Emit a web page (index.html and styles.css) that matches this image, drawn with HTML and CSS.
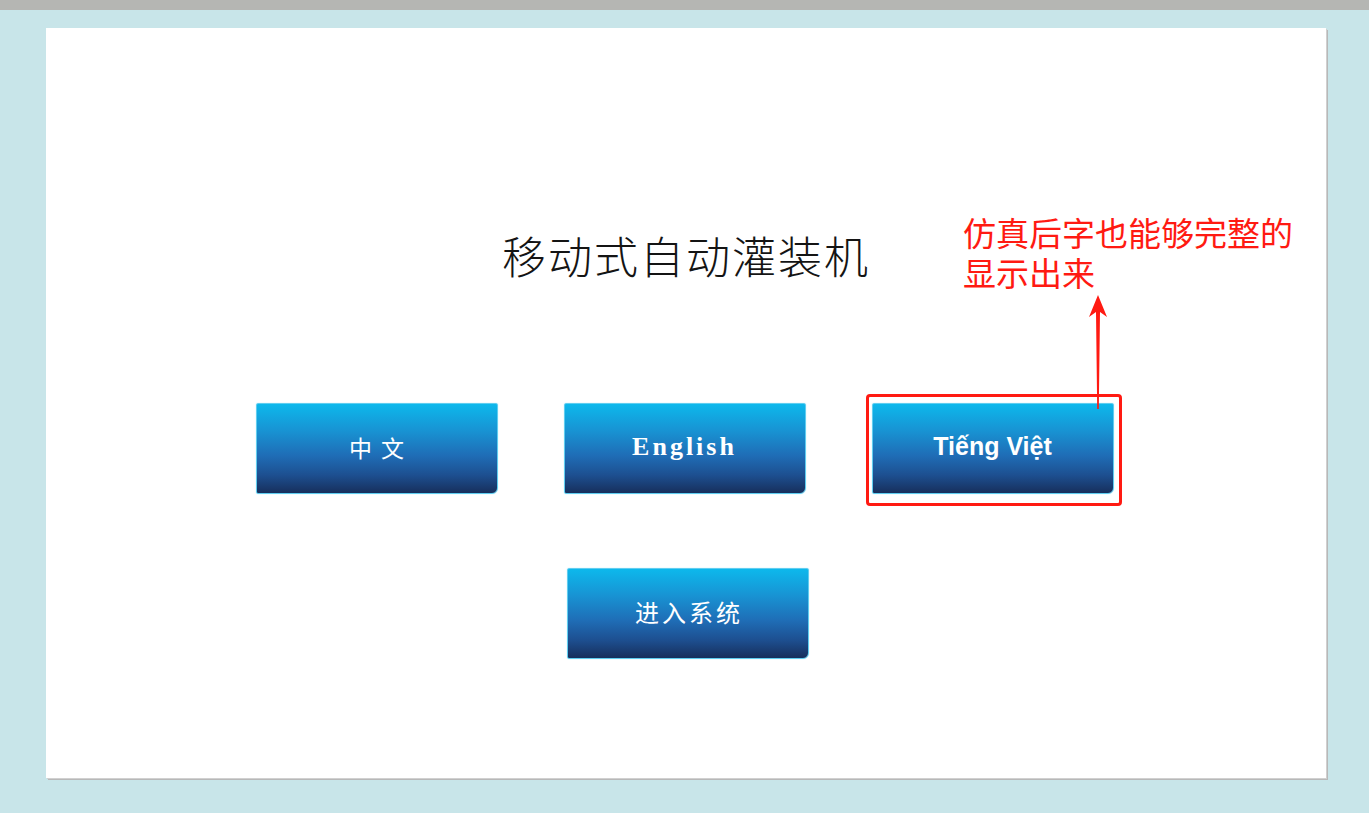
FILE: index.html
```html
<!DOCTYPE html>
<html lang="zh-CN">
<head>
    <meta charset="UTF-8">
    <meta name="viewport" content="width=device-width, initial-scale=1.0">
    <title>移动式自动灌装机</title>
    <link rel="stylesheet" href="styles.css">
</head>
<body>
    <div class="top-bar"></div>

    <div class="screen">
        <h1 class="screen-title">移动式自动灌装机</h1>

        <div class="lang-row">
            <button class="hmi-btn btn-zh">中文</button>
            <button class="hmi-btn btn-en">English</button>
            <button class="hmi-btn btn-vi">Tiếng Việt</button>
        </div>

        <div class="enter-row">
            <button class="hmi-btn btn-enter">进入系统</button>
        </div>

        <!-- 标注 -->
        <div class="note-box"></div>
        <svg class="note-arrow" width="24" height="116" viewBox="0 0 24 116">
            <polygon points="12,0 21,22 14,17 12.8,114 11.2,114 10,17 3,22" fill="#ff1a12"/>
        </svg>
        <p class="note-text">仿真后字也能够完整的<br>显示出来</p>
    </div>
</body>
</html>
```

FILE: styles.css
```css
* {
    margin: 0;
    padding: 0;
    box-sizing: border-box;
}

body {
    background: #c8e5e9;
    font-family: "Noto Sans CJK SC", "Liberation Sans", sans-serif;
    min-height: 100vh;
}

.top-bar {
    height: 10px;
    background: #b5b6b3;
}

.screen {
    position: relative;
    width: 1280px;
    height: 750px;
    margin: 18px 0 0 46px;
    background: #fff;
    box-shadow: 1px 1px 0 #d0d0d0, 2px 2px 0 #b8b8b8;
    padding-top: 197px;
}

.screen-title {
    width: fit-content;
    margin: 0 auto;
    font-size: 44px;
    font-weight: 300;
    line-height: 60px;
    color: #141414;
    letter-spacing: 2px;
}

.lang-row {
    display: flex;
    justify-content: center;
    gap: 66px;
    margin-top: 118px;
    padding-right: 3px;
}

.enter-row {
    display: flex;
    justify-content: center;
    margin-top: 74px;
    padding-left: 3px;
}

.hmi-btn {
    width: 242px;
    height: 91px;
    border: 1px solid #5fcdf0;
    border-radius: 2px 2px 6px 2px;
    background: linear-gradient(to bottom, #0db8ec 0%, #1893d3 30%, #1f6db6 58%, #1d4f90 80%, #172f5c 100%);
    box-shadow: 0 0 1px #7fdaf5;
    color: #fff;
    display: flex;
    align-items: center;
    justify-content: center;
    padding-bottom: 4px;
    cursor: pointer;
}

.btn-zh {
    font-family: "Noto Sans CJK SC", sans-serif;
    font-size: 23px;
    letter-spacing: 9px;
    padding-left: 9px;
}

.btn-en {
    font-family: "Liberation Serif", serif;
    font-weight: bold;
    font-size: 26px;
    letter-spacing: 3px;
}

.btn-vi {
    font-family: "Liberation Sans", Arial, sans-serif;
    font-weight: bold;
    font-size: 25px;
}

.btn-enter {
    font-family: "Noto Sans CJK SC", sans-serif;
    font-size: 24px;
    letter-spacing: 3px;
    padding-left: 3px;
}

.note-box {
    position: absolute;
    left: 820px;
    top: 366px;
    width: 256px;
    height: 112px;
    border: 3px solid #ff1a12;
    border-radius: 4px;
}

.note-arrow {
    position: absolute;
    left: 1040px;
    top: 267px;
}

.note-text {
    position: absolute;
    left: 917px;
    top: 184px;
    font-size: 33px;
    line-height: 40px;
    color: #ff1a12;
    white-space: nowrap;
}
```
